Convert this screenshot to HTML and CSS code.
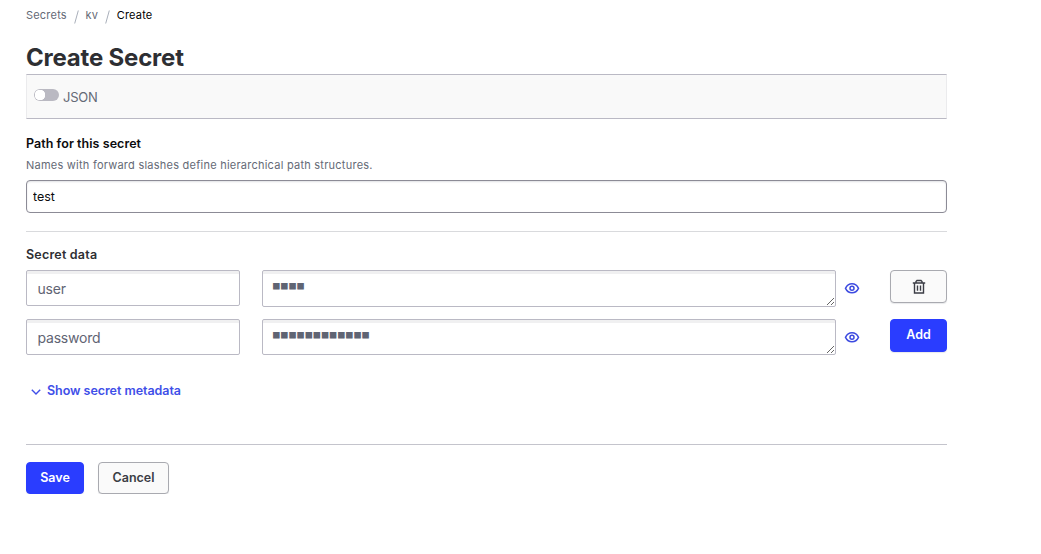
FILE: index.html
```html
<!DOCTYPE html>
<html lang="en">
<head>
    <meta charset="UTF-8">
    <meta name="viewport" content="width=device-width, initial-scale=1.0">
    <title>Create Secret</title>
    <link rel="stylesheet" href="styles.css">
</head>
<body>
    <div class="container">
        <!-- Breadcrumb -->
        <nav class="breadcrumb">
            <a href="#">Secrets</a>
            <svg class="slash" viewBox="0 0 5 14"><path d="M4.3 .5L.7 13.5"/></svg>
            <a href="#">kv</a>
            <svg class="slash" viewBox="0 0 5 14"><path d="M4.3 .5L.7 13.5"/></svg>
            <span class="current">Create</span>
        </nav>

        <h1>Create Secret</h1>

        <!-- Toolbar -->
        <div class="toolbar">
            <span class="switch"></span>
            <span class="switch-label">JSON</span>
        </div>

        <form>
            <!-- Secret path -->
            <label class="label path-label" for="path">Path for this secret</label>
            <p class="help">Names with forward slashes define hierarchical path structures.</p>
            <input type="text" class="path-input" id="path" value="test">

            <hr class="divider">

            <!-- Key / value rows -->
            <div class="label data-label">Secret data</div>
            <div class="kv-row">
                <input type="text" class="key-input" value="user">
                <textarea class="value-input first" spellcheck="false">■■■■</textarea>
                <svg class="eye" viewBox="0 0 16 16"><path d="M1.5 8.300C3 5.200 5.300 3.800 8 3.800s5 1.400 6.500 4.500c-1.500 3.100-3.800 4.500-6.500 4.500s-5-1.400-6.500-4.500z"/><circle cx="8" cy="8.300" r="2"/></svg>
                <button type="button" class="btn row-btn">
                    <svg class="trash" viewBox="0 0 14 16"><path d="M.8 4h12.400M4 4V2.500L5 1.500h4l1 1V4M2.500 4v10h9V4M5.500 6.500v5.200M8.500 6.500v5.200"/></svg>
                </button>
            </div>
            <div class="kv-row">
                <input type="text" class="key-input" value="password">
                <textarea class="value-input" spellcheck="false">■■■■■■■■■■■■</textarea>
                <svg class="eye" viewBox="0 0 16 16"><path d="M1.5 8.300C3 5.200 5.300 3.800 8 3.800s5 1.400 6.500 4.500c-1.500 3.100-3.800 4.500-6.500 4.500s-5-1.400-6.500-4.500z"/><circle cx="8" cy="8.300" r="2"/></svg>
                <button type="button" class="btn primary row-btn">Add</button>
            </div>

            <a href="#" class="metadata-toggle">
                <svg class="chevron" viewBox="0 0 10 6"><path d="M.8.8L5 5 9.200.8"/></svg>
                Show secret metadata
            </a>

            <!-- Form buttons -->
            <div class="form-actions">
                <button type="button" class="btn primary save">Save</button>
                <button type="button" class="btn cancel">Cancel</button>
            </div>
        </form>
    </div>
</body>
</html>
```
FILE: styles.css
```css
* {
    box-sizing: border-box;
}
body {
    font-family: Inter, "Liberation Sans", sans-serif;
    margin: 0;
    background-color: #ffffff;
    color: #2e2f33;
}
.container {
    width: 921px;
    margin-left: 26px;
    padding-top: 6px;
}
a {
    color: #656a76;
    text-decoration: none;
}
svg {
    fill: none;
    stroke: currentColor;
}
.breadcrumb {
    display: flex;
    align-items: center;
    height: 18px;
    font-size: 11px;
    letter-spacing: 0.2px;
}
.slash {
    width: 5px;
    height: 14px;
    margin: 3px 6.8px 0;
    color: #a9afba;
}
.breadcrumb .current {
    color: #000000;
}
h1 {
    margin: 18px 0 0;
    font-size: 24px;
    line-height: 32px;
    font-weight: 700;
    letter-spacing: -0.2px;
}
.toolbar {
    display: flex;
    align-items: center;
    height: 45px;
    padding-left: 7px;
    background-color: #f9f9f9;
    border: 1px solid #ebebed;
    border-top-color: #bab9c4;
    border-bottom-color: #bab9c4;
}
.switch {
    width: 25px;
    height: 12px;
    margin-top: -3px;
    border-radius: 6px;
    background: radial-gradient(circle at 6px 6px, #ffffff 5px, #bab9c2 5.5px);
}
.switch-label {
    margin: 1px 0 0 4px;
    font-size: 13px;
    letter-spacing: -0.2px;
    color: #656a76;
}
.label {
    display: block;
    font-size: 12.5px;
    line-height: 18px;
    font-weight: 600;
    letter-spacing: 0.05px;
}
.path-label {
    margin-top: 16px;
    color: #0c0c0e;
}
.help {
    margin: 3px 0 6px;
    font-size: 11px;
    line-height: 18px;
    letter-spacing: 0.24px;
    color: #656a76;
}
.path-input {
    display: block;
    width: 100%;
    height: 33px;
    padding: 0 6px 1px;
    border: 1px solid #8c8b96;
    border-radius: 4px;
    box-shadow: inset 0 1px 2px rgba(101, 106, 118, 0.2);
    font-family: inherit;
    font-size: 12.5px;
    color: #0c0c0e;
}
.divider {
    height: 1px;
    margin: 18px 0 14px;
    border: none;
    background-color: #d9dadd;
}
.data-label {
    margin-bottom: 6px;
    letter-spacing: 0.2px;
}
.kv-row {
    display: grid;
    grid-template-columns: 214px 574px 10px 57px;
    column-gap: 22px;
    align-items: start;
    height: 49px;
}
.key-input,
.value-input {
    width: 100%;
    height: 36px;
    margin: 0;
    border: 1px solid #bab9c4;
    border-radius: 2px;
    box-shadow: inset 0 4px 0 -1px #f0f0f1;
    color: #5f6473;
}
.key-input {
    padding: 1px 10.5px 0;
    font-family: inherit;
    font-size: 14px;
    letter-spacing: -0.2px;
}
.value-input {
    padding: 7px 10px;
    overflow: hidden;
    resize: vertical;
    font-family: "DejaVu Sans Mono", monospace;
    font-size: 11px;
    line-height: 16px;
    letter-spacing: 1.5px;
}
.value-input.first {
    height: 37px;
}
.eye {
    width: 16px;
    height: 16px;
    margin: 10px 0 0 -14px;
    color: #3d4be0;
    stroke-width: 1.5;
}
.btn {
    display: flex;
    align-items: center;
    justify-content: center;
    height: 32px;
    padding: 0 0 1px;
    background-color: #fafafa;
    border: 1px solid #a9aab0;
    border-radius: 4px;
    box-shadow: 0 1px 1px rgba(101, 106, 118, 0.15);
    font-family: inherit;
    font-size: 12.5px;
    font-weight: 600;
    color: #3b3d45;
}
.btn.primary {
    background-color: #2a3dff;
    border-color: #2a3dff;
    color: #ffffff;
}
.row-btn {
    width: 57px;
    height: 33px;
}
.btn.primary.row-btn {
    padding-bottom: 2px;
}
.trash {
    width: 14px;
    height: 16px;
    margin-top: 1px;
    stroke-width: 1.4;
}
.metadata-toggle {
    display: flex;
    align-items: center;
    height: 18px;
    margin-top: 13px;
    padding-left: 5px;
    font-size: 12.5px;
    font-weight: 600;
    letter-spacing: -0.05px;
    color: #3f4fe8;
}
.chevron {
    width: 10px;
    height: 6px;
    margin: 3px 6px 0 0;
    stroke-width: 1.4;
}
.form-actions {
    display: flex;
    gap: 14px;
    margin-top: 45px;
    padding-top: 17px;
    border-top: 1px solid #c4c4cc;
}
.save {
    width: 58px;
}
.cancel {
    width: 71px;
}
```
